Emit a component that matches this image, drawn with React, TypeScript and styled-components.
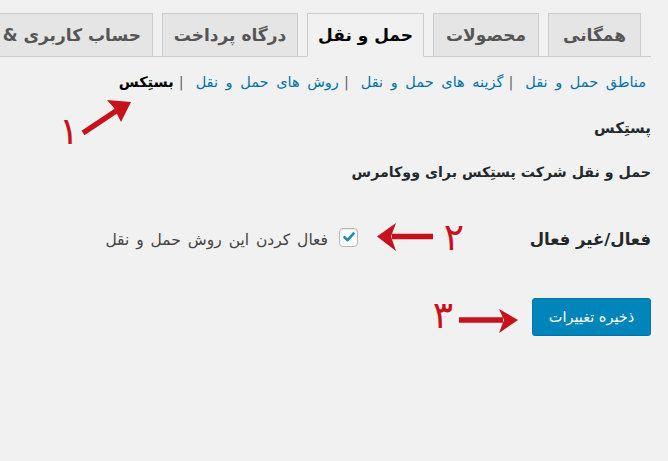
import React from "react";
import styled, { createGlobalStyle } from "styled-components";

const Global = createGlobalStyle`
  html, body { margin: 0; padding: 0; background: #f1f1f1; overflow: hidden; }
  body { direction: rtl; font-family: "DejaVu Sans", sans-serif; }
  * { box-sizing: border-box; }
`;

const Page = styled.div`
  position: relative;
  width: 668px;
  height: 461px;
  overflow: hidden;
  background: #f1f1f1;
`;

const Wrap = styled.div`
  margin-right: 17px;
`;

const TabBar = styled.nav`
  display: flex;
  gap: 9px;
  padding-top: 13px;
  padding-right: 10px;
  border-bottom: 1px solid #cccccc;
  white-space: nowrap;
`;

const Tab = styled.a<{ $active?: boolean; $w: number; $start?: boolean }>`
  flex: 0 0 auto;
  width: ${(p) => p.$w}px;
  height: ${(p) => (p.$active ? 44 : 43)}px;
  margin-bottom: ${(p) => (p.$active ? -1 : 0)}px;
  display: flex;
  align-items: center;
  justify-content: ${(p) => (p.$start ? "flex-start" : "center")};
  padding-right: ${(p) => (p.$start ? 11 : 0)}px;
  border: 1px solid #cccccc;
  border-bottom: ${(p) => (p.$active ? "1px solid #f1f1f1" : "none")};
  background: ${(p) => (p.$active ? "#f1f1f1" : "#e5e5e5")};
  color: ${(p) => (p.$active ? "#000" : "#555")};
  font-weight: bold;
  font-size: 17px;
  text-decoration: none;
`;

const SubNav = styled.ul`
  display: flex;
  list-style: none;
  margin: 15px 0 0;
  padding: 0 5px 0 0;
  font-size: 14.5px;
  line-height: 20px;
  word-spacing: 3px;
  color: #666;
`;

const SubItem = styled.li<{ $current?: boolean }>`
  color: ${(p) => (p.$current ? "#000" : "#0073aa")};
  font-weight: ${(p) => (p.$current ? "bold" : "normal")};
`;

const Sep = styled.span`
  color: #666;
  margin: 0 12px 0 5px;
`;

const Title = styled.h2`
  margin: 26px 0 0;
  font-size: 15px;
  font-weight: bold;
  color: #23282d;
  line-height: 20px;
`;

const Desc = styled.p`
  margin: 24px 0 0;
  font-size: 14.2px;
  font-weight: bold;
  color: #23282d;
  line-height: 20px;
`;

const Row = styled.div`
  display: flex;
  align-items: center;
  margin-top: 43px;
  height: 24px;
`;

const RowLabel = styled.div`
  width: 293px;
  font-size: 16.5px;
  font-weight: bold;
  color: #23282d;
  padding-top: 4px;
`;

const CheckLabel = styled.label`
  display: flex;
  align-items: center;
  gap: 11px;
  font-size: 15.5px;
  word-spacing: 2px;
  color: #444;
`;

const LabelText = styled.span`
  padding-top: 5px;
`;

const Box = styled.span`
  width: 19px;
  height: 19px;
  border: 1px solid #b4b9be;
  border-radius: 4px;
  background: #fff;
  box-shadow: inset 0 1px 2px rgba(0, 0, 0, 0.1);
  display: flex;
  align-items: center;
  justify-content: center;
`;

const SaveButton = styled.button`
  margin-top: 49px;
  width: 119px;
  height: 38px;
  background: #0085ba;
  border: 1px solid #0073aa;
  border-radius: 3px;
  color: #fff;
  font-family: "DejaVu Sans", sans-serif;
  font-size: 14.5px;
  padding: 0;
`;

const Overlay = styled.svg`
  position: absolute;
  top: 0;
  left: 0;
  pointer-events: none;
`;

const tabs = [
  { t: "همگانی", w: 93 },
  { t: "محصولات", w: 106 },
  { t: "حمل و نقل", w: 117, active: true },
  { t: "درگاه پرداخت", w: 136 },
  { t: "حساب کاربری &", w: 180, start: true },
];

const RED = "#c8121b";

export default function App() {
  return (
    <Page>
      <Global />
      <Wrap>
        <TabBar>
          {tabs.map((t) => (
            <Tab key={t.t} $w={t.w} $active={t.active} $start={t.start}>
              {t.t}
            </Tab>
          ))}
        </TabBar>
        <SubNav>
          <SubItem>مناطق حمل و نقل</SubItem>
          <Sep>|</Sep>
          <SubItem>گزینه های حمل و نقل</SubItem>
          <Sep>|</Sep>
          <SubItem>روش های حمل و نقل</SubItem>
          <Sep>|</Sep>
          <SubItem $current>بستِکس</SubItem>
        </SubNav>
        <Title>پستِکس</Title>
        <Desc>حمل و نقل شرکت پستِکس برای ووکامرس</Desc>
        <Row>
          <RowLabel>فعال/غیر فعال</RowLabel>
          <CheckLabel>
            <Box>
              <svg width="14" height="14" viewBox="0 0 14 14">
                <path d="M2.5 7.2 L5.6 10.2 L11.6 3.4" fill="none" stroke="#1e8cbe" strokeWidth="2.6" strokeLinecap="round" strokeLinejoin="round" />
              </svg>
            </Box>
            <LabelText>فعال کردن این روش حمل و نقل</LabelText>
          </CheckLabel>
        </Row>
        <SaveButton>ذخیره تغییرات</SaveButton>
      </Wrap>
      <Overlay width="668" height="461" viewBox="0 0 668 461">
        <text x="69" y="144" fill={RED} fontSize="38" fontFamily="DejaVu Sans" textAnchor="middle">۱</text>
        <line x1="83" y1="133" x2="116" y2="111" stroke={RED} strokeWidth="5.5" />
        <polygon points="131,102 107,100 114,108 121,122" fill={RED} />
        <text x="454" y="250" fill={RED} fontSize="38" fontFamily="DejaVu Sans" textAnchor="middle">۲</text>
        <line x1="433" y1="236.5" x2="392" y2="236.5" stroke={RED} strokeWidth="5.5" />
        <polygon points="377,236.5 396,223 391,236.5 396,251" fill={RED} />
        <text x="443" y="328" fill={RED} fontSize="38" fontFamily="DejaVu Sans" textAnchor="middle">۳</text>
        <line x1="459" y1="320" x2="503" y2="320" stroke={RED} strokeWidth="5.5" />
        <polygon points="518,320 499,309 504,320 499,333" fill={RED} />
      </Overlay>
    </Page>
  );
}
